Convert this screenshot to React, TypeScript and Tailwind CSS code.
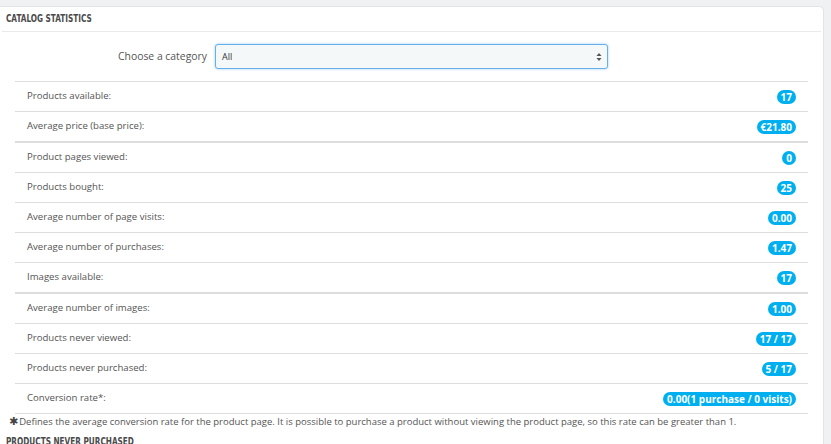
import React from "react";

const rows: { label: string; value: string; thick?: boolean }[] = [
  { label: "Products available:", value: "17" },
  { label: "Average price (base price):", value: "€21.80" },
  { label: "Product pages viewed:", value: "0", thick: true },
  { label: "Products bought:", value: "25" },
  { label: "Average number of page visits:", value: "0.00" },
  { label: "Average number of purchases:", value: "1.47" },
  { label: "Images available:", value: "17" },
  { label: "Average number of images:", value: "1.00", thick: true },
  { label: "Products never viewed:", value: "17 / 17" },
  { label: "Products never purchased:", value: "5 / 17" },
  { label: "Conversion rate*:", value: "0.00(1 purchase / 0 visits)" },
];

const condensed = { fontFamily: '"DejaVu Sans Condensed", "DejaVu Sans", sans-serif' };

export default function App() {
  return (
    <div
      className="w-[831px] h-[444px] overflow-hidden bg-[#eff1f2] pt-[6px]"
      style={{ fontFamily: '"Open Sans", "Liberation Sans", sans-serif' }}
    >
      <div className="w-[824px] h-[460px] bg-white border-t border-r border-[#e2e4e6] rounded-tr-[5px]">
        <div className="mx-[2px] h-[25px] border-b border-[#eaeaea] px-[4px] flex items-center">
          <span
            className="inline-block origin-left scale-x-[0.74] text-[11px] font-bold text-[#4a4a4a] whitespace-nowrap"
            style={condensed}
          >
            CATALOG STATISTICS
          </span>
        </div>
        <div className="flex items-center mt-[12px]">
          <div className="w-[207px] text-right text-[10.4px] text-[#555]">Choose a category</div>
          <div className="ml-[8px] w-[393px] h-[25px] rounded-[3px] border border-[#66afe9] bg-[#f5f8f9] shadow-[0_0_3px_rgba(102,175,233,0.6)] flex items-center justify-between pl-[6px] pr-[5px]">
            <span className="text-[9px] text-[#333]">All</span>
            <svg width="6" height="10" viewBox="0 0 6 10">
              <path d="M3 1 L5.5 4 L0.5 4 Z" fill="#555" />
              <path d="M3 9 L5.5 6 L0.5 6 Z" fill="#555" />
            </svg>
          </div>
        </div>
        <div className="mx-[15px] mt-[12px] w-[793px]">
          {rows.map((r, i) => (
            <div
              key={i}
              className={
                "flex items-center justify-between pl-[12px] pr-[12px] border-[#ddd] " +
                (r.thick ? "h-[31px] border-t-2" : "h-[30px] border-t") +
                (i === rows.length - 1 ? " border-b h-[31px]" : "")
              }
            >
              <span className="text-[9.6px] text-[#555]">{r.label}</span>
              <span className="bg-[#00aff0] text-white font-bold text-[10px] leading-[14px] h-[14px] px-[4px] rounded-full">
                {r.value}
              </span>
            </div>
          ))}
        </div>
        <div className="pl-[9px] h-[16px] flex items-center text-[9.5px] text-[#555]">
          <span className="text-[11px] text-[#444] mr-[1px]" style={{ fontFamily: '"DejaVu Sans", sans-serif' }}>✱</span>
          Defines the average conversion rate for the product page. It is possible to purchase a product without viewing the product page, so this rate can be greater than 1.
        </div>
        <div className="px-[6px] mt-[3px] h-[12px] leading-[12px]">
          <span
            className="inline-block origin-left scale-x-[0.74] text-[11px] font-bold text-[#4a4a4a] whitespace-nowrap"
            style={condensed}
          >
            PRODUCTS NEVER PURCHASED
          </span>
        </div>
      </div>
    </div>
  );
}
